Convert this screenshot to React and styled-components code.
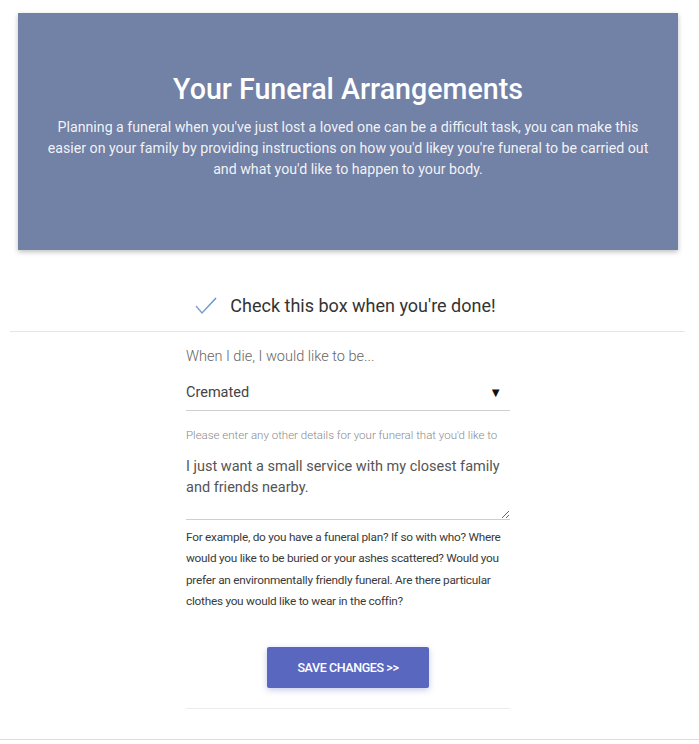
import React from 'react';
import styled, { createGlobalStyle } from 'styled-components';

const GlobalStyle = createGlobalStyle`
  body {
    margin: 0;
    background: #ffffff;
    font-family: Roboto, "Liberation Sans", Arial, sans-serif;
  }
`;

const Page = styled.div`
  width: 699px;
  min-height: 744px;
  display: flex;
  flex-direction: column;
`;

const Hero = styled.header`
  margin: 13px 21px 0 18px;
  height: 237px;
  background: #7281a6;
  box-shadow: 0 2px 5px rgba(0, 0, 0, 0.25);
  display: flex;
  flex-direction: column;
  align-items: center;
  padding: 59px 20px 0;
  box-sizing: border-box;
  color: #ffffff;
  text-align: center;
`;

const Title = styled.h1`
  margin: 0;
  font-size: 28.6px;
  font-weight: 500;
  line-height: 34px;
`;

const Intro = styled.p`
  margin: 11px 0 0;
  font-size: 14.2px;
  line-height: 21px;
  font-weight: 400;
  color: rgba(255, 255, 255, 0.92);
`;

const CheckRow = styled.div`
  margin: 40px 14px 0 10px;
  height: 30px;
  padding: 0 4px 11px 0;
  display: flex;
  align-items: center;
  justify-content: center;
  gap: 13px;
  border-bottom: 1px solid #e6e6e6;
`;

const CheckLabel = styled.span`
  font-size: 18px;
  color: #333333;
`;

const Form = styled.div`
  width: 324px;
  margin: 0 0 0 186px;
  display: flex;
  flex-direction: column;
  border-bottom: 1px solid #ececec;
  padding-bottom: 20px;
`;

const Question = styled.div`
  margin-top: 16px;
  font-size: 14.5px;
  font-weight: 300;
  color: #666666;
  line-height: 18px;
`;

const Select = styled.div`
  margin-top: 13px;
  height: 27px;
  display: flex;
  align-items: center;
  justify-content: space-between;
  border-bottom: 1px solid #cfcfcf;
  font-size: 14.5px;
  color: #444444;
  padding-bottom: 4px;
`;

const Arrow = styled.span`
  font-size: 13px;
  color: #111111;
  margin-right: 8px;
`;

const SmallLabel = styled.div`
  margin-top: 17px;
  font-size: 11.5px;
  font-weight: 300;
  color: #8a8a8a;
  line-height: 14px;
`;

const TextArea = styled.textarea`
  margin-top: 14px;
  height: 64px;
  resize: vertical;
  border: none;
  border-bottom: 1px solid #cfcfcf;
  padding: 0;
  outline: none;
  font-family: Roboto, "Liberation Sans", Arial, sans-serif;
  font-size: 14.5px;
  line-height: 21px;
  color: #555555;
  box-sizing: border-box;
`;

const Help = styled.p`
  margin: 7px 0 0;
  font-size: 11.8px;
  letter-spacing: -0.25px;
  line-height: 21.3px;
  color: #3a3a3a;
`;

const SaveButton = styled.button`
  align-self: center;
  margin-top: 35px;
  width: 162px;
  height: 41px;
  border: none;
  border-radius: 2px;
  background: #5a67bf;
  color: #ffffff;
  font-family: Roboto, "Liberation Sans", Arial, sans-serif;
  font-size: 12.5px;
  font-weight: 500;
  letter-spacing: -0.4px;
  text-transform: uppercase;
  box-shadow: 0 2px 6px rgba(90, 103, 191, 0.35);
  cursor: pointer;
`;

const Footer = styled.div`
  margin-top: 30px;
  border-bottom: 1px solid #dddddd;
`;

const Check = () => (
  <svg width="22" height="17" viewBox="0 0 22 17">
    <defs>
      <linearGradient id="ck" x1="0" y1="0" x2="1" y2="0">
        <stop offset="0" stopColor="#8aa3c2" />
        <stop offset="1" stopColor="#5b8fd6" />
      </linearGradient>
    </defs>
    <polyline
      points="1,9 7,16 21,1"
      fill="none"
      stroke="url(#ck)"
      strokeWidth="1.4"
    />
  </svg>
);

export default function App() {
  return (
    <Page>
      <GlobalStyle />
      <Hero>
        <Title>Your Funeral Arrangements</Title>
        <Intro>
          Planning a funeral when you've just lost a loved one can be a difficult task, you can make this
          easier on your family by providing instructions on how you'd likey you're funeral to be carried out
          and what you'd like to happen to your body.
        </Intro>
      </Hero>
      <CheckRow>
        <Check />
        <CheckLabel>Check this box when you're done!</CheckLabel>
      </CheckRow>
      <Form>
        <Question>When I die, I would like to be...</Question>
        <Select>
          <span>Cremated</span>
          <Arrow>▼</Arrow>
        </Select>
        <SmallLabel>Please enter any other details for your funeral that you'd like to</SmallLabel>
        <TextArea
          defaultValue="I just want a small service with my closest family and friends nearby."
        />
        <Help>
          For example, do you have a funeral plan? If so with who? Where would you like to be buried or
          your ashes scattered? Would you prefer an environmentally friendly funeral. Are there particular
          clothes you would like to wear in the coffin?
        </Help>
        <SaveButton>Save Changes &gt;&gt;</SaveButton>
      </Form>
      <Footer />
    </Page>
  );
}
